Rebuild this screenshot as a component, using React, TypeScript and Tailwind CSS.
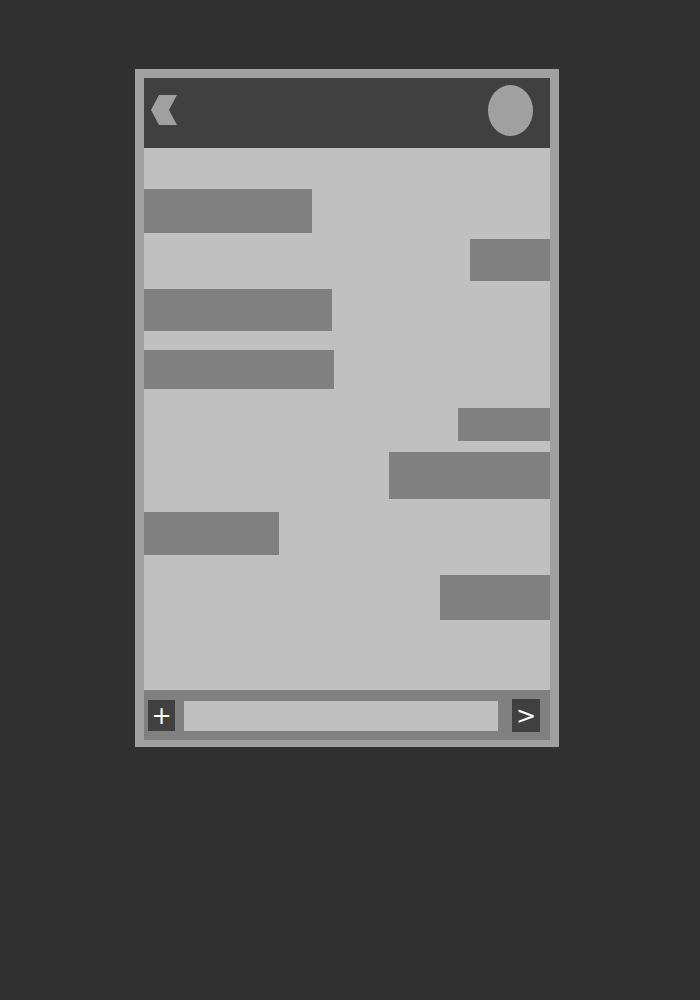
const bubbles = [
  { side: "left", cls: "mt-[41px] w-[168px] h-[44px]" },
  { side: "right", cls: "mt-[6px] w-[80px] h-[42px]" },
  { side: "left", cls: "mt-[8px] w-[188px] h-[42px]" },
  { side: "left", cls: "mt-[19px] w-[190px] h-[39px]" },
  { side: "right", cls: "mt-[19px] w-[92px] h-[33px]" },
  { side: "right", cls: "mt-[11px] w-[161px] h-[47px]" },
  { side: "left", cls: "mt-[13px] w-[135px] h-[43px]" },
  { side: "right", cls: "mt-[20px] w-[110px] h-[45px]" },
]

export default function App() {
  return (
    <div className="min-h-[1000px] w-full bg-[#303030] pt-[69px] font-['DejaVu_Sans',sans-serif]">
      <div className="ml-[135px] w-[424px] bg-[#a0a0a0] px-[9px] pt-[9px] pb-[7px]">

        <div className="flex h-[70px] items-start justify-between bg-[#404040] pl-[7px] pr-[17px]">
          <svg width="27" height="30" viewBox="0 0 27 30" className="mt-[17px]">
            <polygon points="0,15 8,0 26,0 18,15 26,30 8,30" fill="#a0a0a0" />
          </svg>
          <div className="mt-[7px] h-[51px] w-[45px] rounded-[50%] bg-[#a0a0a0]" />
        </div>

        <div className="flex h-[542px] flex-col bg-[#c0c0c0]">
          {bubbles.map((b, i) => (
            <div
              key={i}
              className={`${b.cls} ${b.side === "right" ? "self-end" : "self-start"} bg-[#808080]`}
            />
          ))}
        </div>

        <div className="flex h-[50px] items-start bg-[#808080] pl-[4px] pr-[10px]">
          <button className="mt-[10px] flex h-[31px] w-[27px] items-center justify-center bg-[#404040] text-[24px] leading-none text-white">
            +
          </button>
          <div className="mt-[11px] ml-[9px] h-[30px] w-[314px] bg-[#c0c0c0]" />
          <button className="mt-[9px] ml-[14px] flex h-[33px] w-[28px] items-center justify-center bg-[#404040] text-[24px] leading-none text-white">
            &gt;
          </button>
        </div>

      </div>
    </div>
  )
}
